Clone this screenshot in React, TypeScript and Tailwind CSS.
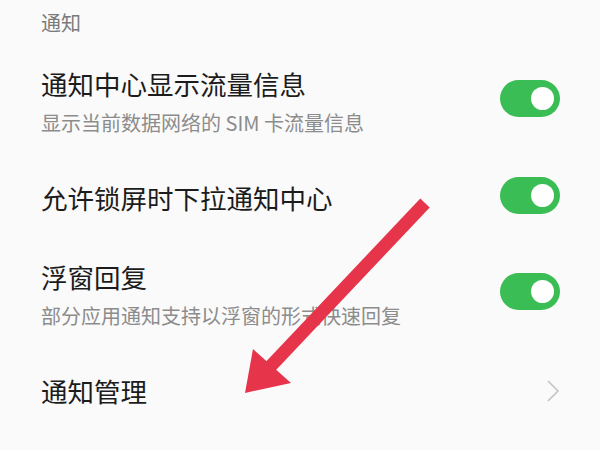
import React from "react";

const font = { fontFamily: '"Noto Sans CJK SC", "Noto Sans", sans-serif' };

function Toggle() {
  return (
    <div className="-mt-1.5 flex h-[37px] w-[60px] shrink-0 items-center justify-end rounded-full bg-[#3bbd55] pr-[6px]">
      <div className="h-[23px] w-[23px] rounded-full bg-white" />
    </div>
  );
}

function Chevron() {
  return (
    <svg width="14" height="24" viewBox="0 0 14 24" fill="none" className="shrink-0">
      <polyline points="2,2 12,12 2,22" stroke="#c4c4c4" strokeWidth="1.6" />
    </svg>
  );
}

interface Row {
  title: string;
  desc?: string;
  kind: "toggle" | "link";
}

const rows: Row[] = [
  { title: "通知中心显示流量信息", desc: "显示当前数据网络的 SIM 卡流量信息", kind: "toggle" },
  { title: "允许锁屏时下拉通知中心", kind: "toggle" },
  { title: "浮窗回复", desc: "部分应用通知支持以浮窗的形式快速回复", kind: "toggle" },
  { title: "通知管理", kind: "link" },
];

export default function App() {
  return (
    <div className="relative h-[450px] w-[600px] overflow-hidden bg-[#fafafa]" style={font}>
      <div className="h-[45px] pl-[41px] pt-[10px] text-[20px] leading-[26px] text-[#7a7a7a]">
        通知
      </div>

      {rows.map((r) => (
        <div
          key={r.title}
          className="flex items-center justify-between pl-[41px] pr-[40px] pt-[22px] pb-[23px]"
        >
          <div className="flex flex-col gap-[9px]">
            <div className="text-[26.5px] leading-[34px] text-[#1c1c1c]">{r.title}</div>
            {r.desc && (
              <div className="text-[20px] leading-[26px] text-[#8c8c8c]">{r.desc}</div>
            )}
          </div>
          {r.kind === "toggle" ? <Toggle /> : <Chevron />}
        </div>
      ))}

      {/* red annotation arrow */}
      <svg
        className="pointer-events-none absolute inset-0"
        width="600"
        height="450"
        viewBox="0 0 600 450"
      >
        <line x1="425" y1="203" x2="268" y2="369" stroke="#e6344a" strokeWidth="13" />
        <polygon points="245,393 253,349 291,383" fill="#e6344a" />
      </svg>
    </div>
  );
}
